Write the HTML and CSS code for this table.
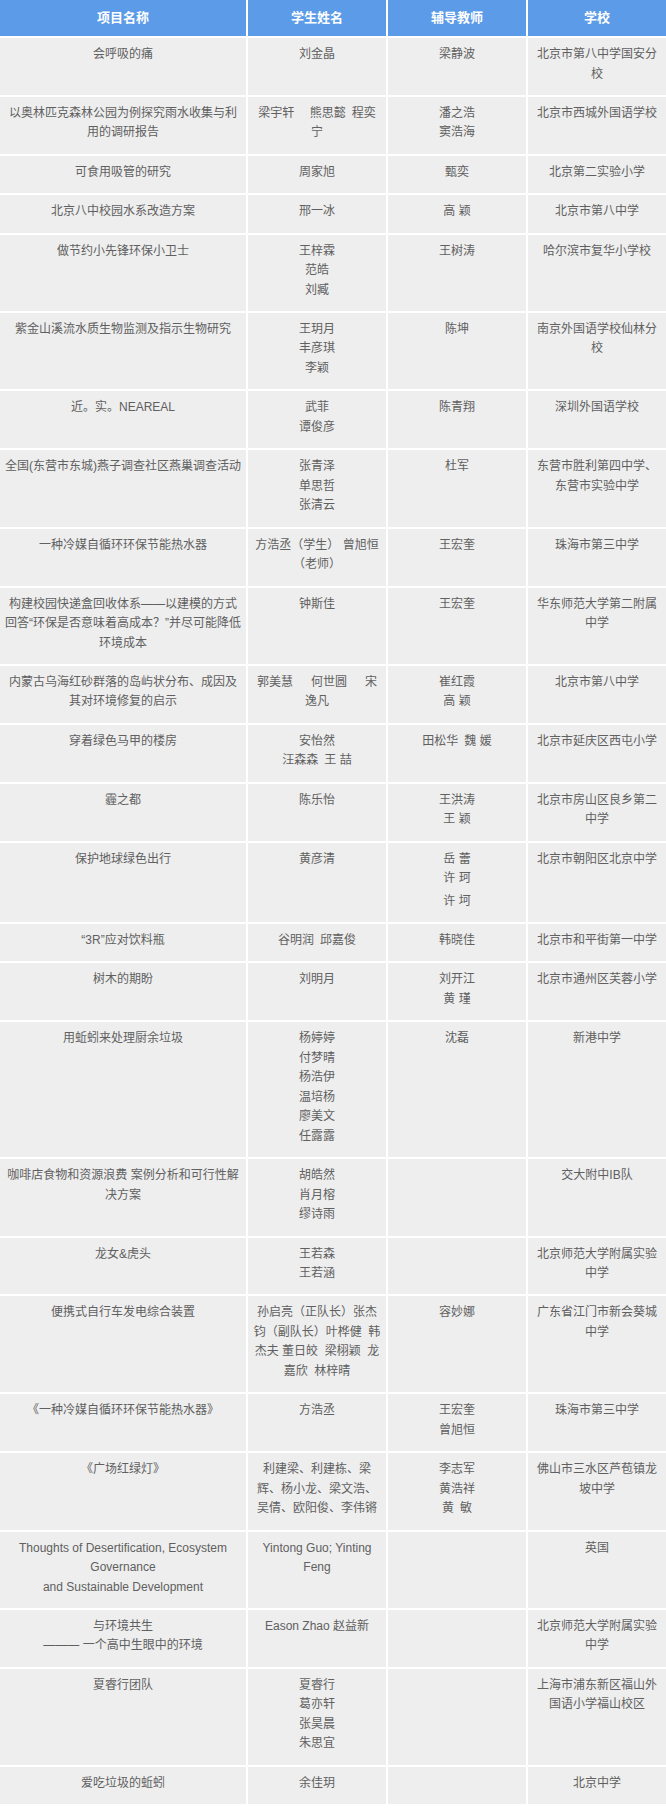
FILE: index.html
```html
<!DOCTYPE html>
<html lang="zh-CN">
<head>
<meta charset="utf-8">
<title>项目列表</title>
<link rel="stylesheet" href="styles.css">
</head>
<body>
<table class="list">
  <colgroup>
    <col class="c1"><col class="c2"><col class="c3"><col class="c4">
  </colgroup>
  <thead>
    <tr><th>项目名称</th><th>学生姓名</th><th>辅导教师</th><th>学校</th></tr>
  </thead>
  <tbody>
    <tr><td>会呼吸的痛</td><td>刘金晶</td><td>梁静波</td><td>北京市第八中学国安分校</td></tr>
    <tr><td>以奥林匹克森林公园为例探究雨水收集与利用的调研报告</td><td>梁宇轩&emsp;&nbsp;熊思懿&ensp;程奕宁</td><td>潘之浩<br>窦浩海</td><td>北京市西城外国语学校</td></tr>
    <tr><td>可食用吸管的研究</td><td>周家旭</td><td>甄奕</td><td>北京第二实验小学</td></tr>
    <tr><td>北京八中校园水系改造方案</td><td>邢一冰</td><td>高&nbsp;颖</td><td>北京市第八中学</td></tr>
    <tr><td>做节约小先锋环保小卫士</td><td>王梓霖<br>范皓<br>刘臧</td><td>王树涛</td><td>哈尔滨市复华小学校</td></tr>
    <tr><td>紫金山溪流水质生物监测及指示生物研究</td><td>王玥月<br>丰彦琪<br>李颖</td><td>陈坤</td><td>南京外国语学校仙林分校</td></tr>
    <tr><td>近。实。NEAREAL</td><td>武菲<br>谭俊彦</td><td>陈青翔</td><td>深圳外国语学校</td></tr>
    <tr><td>全国(东营市东城)燕子调查社区燕巢调查活动</td><td>张青泽<br>单思哲<br>张清云</td><td>杜军</td><td>东营市胜利第四中学、东营市实验中学</td></tr>
    <tr><td>一种冷媒自循环环保节能热水器</td><td>方浩丞（学生）&nbsp;曾旭恒（老师）</td><td>王宏奎</td><td>珠海市第三中学</td></tr>
    <tr><td>构建校园快递盒回收体系——以建模的方式回答“环保是否意味着高成本？”并尽可能降低环境成本</td><td>钟斯佳</td><td>王宏奎</td><td>华东师范大学第二附属中学</td></tr>
    <tr><td>内蒙古乌海红砂群落的岛屿状分布、成因及其对环境修复的启示</td><td>郭美慧&emsp;&ensp;何世圆&emsp;&ensp;宋逸凡</td><td>崔红霞<br>高&nbsp;颖</td><td>北京市第八中学</td></tr>
    <tr><td>穿着绿色马甲的楼房</td><td>安怡然<br>汪森森&ensp;王&nbsp;喆</td><td>田松华&ensp;魏&nbsp;媛</td><td>北京市延庆区西屯小学</td></tr>
    <tr><td>霾之都</td><td>陈乐怡</td><td>王洪涛<br>王&nbsp;颖</td><td>北京市房山区良乡第二中学</td></tr>
    <tr><td>保护地球绿色出行</td><td>黄彦清</td><td>岳&nbsp;蕾<br>许&nbsp;珂<span class="gap">许&nbsp;坷</span></td><td>北京市朝阳区北京中学</td></tr>
    <tr><td>“3R”应对饮料瓶</td><td>谷明润&ensp;邱嘉俊</td><td>韩晓佳</td><td>北京市和平街第一中学</td></tr>
    <tr><td>树木的期盼</td><td>刘明月</td><td>刘开江<br>黄&nbsp;瑾</td><td>北京市通州区芙蓉小学</td></tr>
    <tr><td>用蚯蚓来处理厨余垃圾</td><td>杨婷婷<br>付梦晴<br>杨浩伊<br>温培杨<br>廖美文<br>任露露</td><td>沈磊</td><td>新港中学</td></tr>
    <tr><td>咖啡店食物和资源浪费 案例分析和可行性解决方案</td><td>胡皓然<br>肖月榕<br>缪诗雨</td><td></td><td>交大附中IB队</td></tr>
    <tr><td>龙女&amp;虎头</td><td>王若森<br>王若涵</td><td></td><td>北京师范大学附属实验中学</td></tr>
    <tr><td>便携式自行车发电综合装置</td><td>孙启亮（正队长）张杰钧（副队长）叶桦健&nbsp; 韩杰夫 董日皎&nbsp; 梁栩颖&nbsp; 龙嘉欣&nbsp; 林梓晴</td><td>容妙娜</td><td>广东省江门市新会葵城中学</td></tr>
    <tr><td>《一种冷媒自循环环保节能热水器》</td><td>方浩丞</td><td>王宏奎<br>曾旭恒</td><td>珠海市第三中学</td></tr>
    <tr><td>《广场红绿灯》</td><td>利建梁、利建栋、梁辉、杨小龙、梁文浩、吴倩、欧阳俊、李伟锵</td><td>李志军<br>黄浩祥<br>黄&ensp;敏</td><td>佛山市三水区芦苞镇龙坡中学</td></tr>
    <tr><td>Thoughts of Desertification, Ecosystem Governance<br>and Sustainable Development</td><td>Yintong Guo; Yinting Feng</td><td></td><td>英国</td></tr>
    <tr><td>与环境共生<br>——— 一个高中生眼中的环境</td><td>Eason Zhao 赵益新</td><td></td><td>北京师范大学附属实验中学</td></tr>
    <tr><td>夏睿行团队</td><td>夏睿行<br>葛亦轩<br>张昊晨<br>朱思宜</td><td></td><td>上海市浦东新区福山外国语小学福山校区</td></tr>
    <tr><td>爱吃垃圾的蚯蚓</td><td>余佳玥</td><td></td><td>北京中学</td></tr>
  </tbody>
</table>
</body>
</html>
```

FILE: styles.css
```css
html, body {
  margin: 0;
  padding: 0;
  background: #ffffff;
}

.list {
  width: 666px;
  table-layout: fixed;
  border-collapse: collapse;
  font-family: "Liberation Sans", "Noto Sans CJK SC", sans-serif;
  font-size: 12px;
  line-height: 19.5px;
  color: #606060;
}

.c1 { width: 247px; }
.c2 { width: 140px; }
.c3 { width: 140px; }
.c4 { width: 139px; }

.list th {
  height: 36px;
  padding: 0 5px;
  background: #5c9be7;
  color: #ffffff;
  font-size: 13px;
  font-weight: bold;
  text-align: center;
  vertical-align: middle;
  border: 2px solid #ffffff;
  border-top: 0;
}

.list td {
  padding: 7px 5px 10.9px;
  background: #eeeeee;
  text-align: center;
  vertical-align: top;
  border: 2px solid #ffffff;
}

.list tr > :first-child { border-left: 0; }
.list tr > :last-child { border-right: 0; }

.gap {
  display: block;
  margin-top: 3px;
}
```
